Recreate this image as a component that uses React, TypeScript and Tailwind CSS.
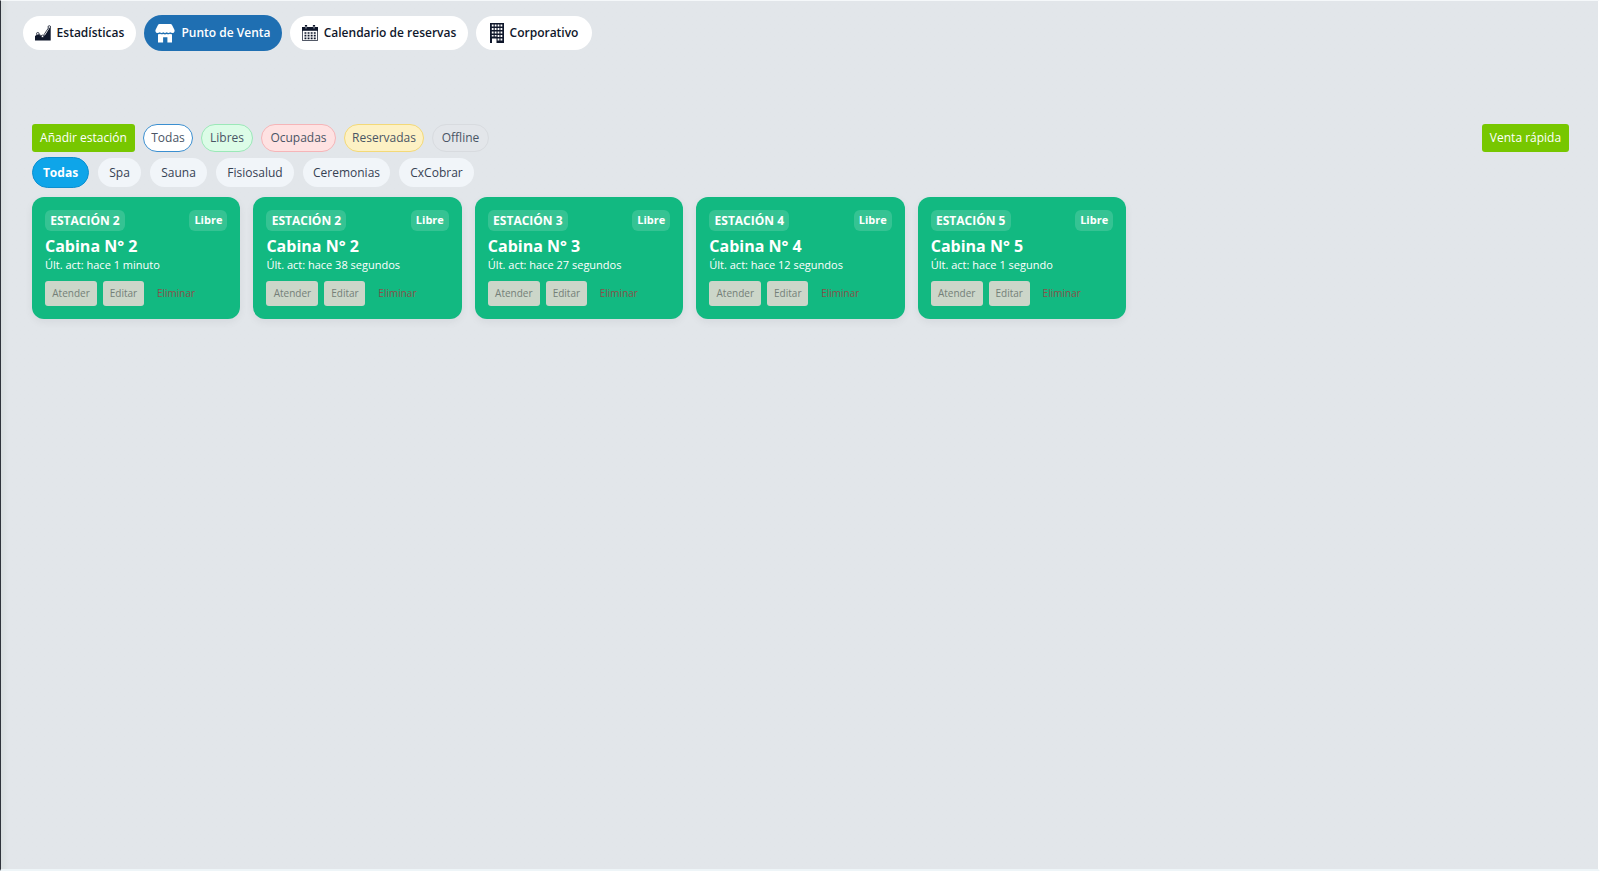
import React from "react";

const StatsIcon = () => (
  <svg viewBox="0 0 16 16" className="h-4 w-4 shrink-0" fill="currentColor" aria-hidden="true">
    <path d="M0 15.500V11L3 9L7.500 12L10.500 9.500L14.500 3H15.700V15.500Z" />
    <circle cx="2.800" cy="8.800" r="1.300" fill="#fff" stroke="currentColor" strokeWidth=".8" />
    <circle cx="7.500" cy="11.300" r="1.200" fill="#fff" stroke="currentColor" strokeWidth=".8" />
    <circle cx="14.300" cy="2" r="1.300" fill="#fff" stroke="currentColor" strokeWidth=".8" />
    <path d="M8.600 10.300L13.400 3M3.900 9.400L6.500 10.800" stroke="currentColor" strokeWidth=".8" />
  </svg>
);

const StoreIcon = () => (
  <svg viewBox="0 0 20 20" className="h-5 w-5 shrink-0" fill="currentColor" aria-hidden="true">
    <path d="M4.500 1h11q1 0 1.500 1l2.400 4.800q.4.900.1 1.800q-.5 1.500-2 1.500q-1.500 0-2.300-.8a2.700 2.700 0 0 1-3.500 0a2.600 2.600 0 0 1-3.400 0a2.700 2.700 0 0 1-3.500 0q-.8.800-2.300.8q-1.500 0-2-1.500q-.3-.9.100-1.800L3 2Q3.500 1 4.500 1Z" />
    <path d="M3 11.300q1.200 0 2-.5q1.700 1 3.300.2q1.700.9 3.400 0q1.600.8 3.300-.2q.8.500 2 .5V19.500h-4.600v-5.300H8.100v5.300H3Z" />
  </svg>
);

const CalendarIcon = () => (
  <svg viewBox="0 0 16 16" className="h-4 w-4 shrink-0" aria-hidden="true">
    <path d="M0 2h16v4.200H0Z" fill="currentColor" />
    <path d="M.4 5v10.600h15.200V5" fill="#fff" stroke="currentColor" strokeWidth=".8" />
    <path d="M0 2h16v3.800H0Z" fill="currentColor" />
    <path d="M4 0v3M12 0v3" stroke="currentColor" strokeWidth="2.200" />
    <path d="M4 1v2.500M12 1v2.500" stroke="#fff" strokeWidth=".7" />
    <path d="M2.500 8h11.500M2.500 10.700h11.500M2.500 13.400h11.500" stroke="currentColor" strokeWidth="1.700" strokeDasharray="1.900 1.200" />
  </svg>
);

const BuildingIcon = () => (
  <svg viewBox="0 0 14 20" className="h-5 w-3.5 shrink-0" aria-hidden="true">
    <path d="M0 0h14v20H0Z" fill="currentColor" />
    <path d="M2.700 1.500v12M5.600 1.500v12M8.500 1.500v16M11.400 1.500v16" stroke="#fff" strokeWidth="1.800" strokeDasharray="2 1.500" />
    <path d="M2 15.500h4.500V20H2Z" fill="#fff" />
  </svg>
);

const sections = [
  { label: "Estadísticas", Icon: StatsIcon, style: "h-[34px] w-[113px] bg-white text-slate-900" },
  { label: "Punto de Venta", Icon: StoreIcon, style: "h-9 w-[138px] bg-[#1f6fb2] text-white" },
  { label: "Calendario de reservas", Icon: CalendarIcon, style: "h-[34px] w-[178px] bg-white text-slate-900" },
  { label: "Corporativo", Icon: BuildingIcon, style: "h-[34px] w-[116px] bg-white text-slate-900" },
];

const states = [
  { label: "Todas", style: "w-[50px] border-[#3b8fd0] bg-white" },
  { label: "Libres", style: "w-[52px] border-[#9be8b8] bg-[#dcfce7]" },
  { label: "Ocupadas", style: "w-[75px] border-[#f5b5b8] bg-[#fee2e2]" },
  { label: "Reservadas", style: "w-20 border-[#f3d978] bg-[#fdf1c4]" },
  { label: "Offline", style: "w-[57px] border-[#d8dbdf] bg-[#e3e6ea]" },
];

const areas = [
  { label: "Todas", style: "h-[31px] w-[57px] bg-[#0ea5e9] border border-[#0c8fd0] text-white font-bold" },
  { label: "Spa", style: "h-[29px] w-[43px] bg-slate-100 text-gray-700 font-medium" },
  { label: "Sauna", style: "h-[29px] w-[57px] bg-slate-100 text-gray-700 font-medium" },
  { label: "Fisiosalud", style: "h-[29px] w-[78px] bg-slate-100 text-gray-700 font-medium" },
  { label: "Ceremonias", style: "h-[29px] w-[87px] bg-slate-100 text-gray-700 font-medium" },
  { label: "CxCobrar", style: "h-[29px] w-[75px] bg-slate-100 text-gray-700 font-medium" },
];

const stations = [
  { code: "ESTACIÓN 2", name: "Cabina N° 2", activity: "hace 1 minuto" },
  { code: "ESTACIÓN 2", name: "Cabina N° 2", activity: "hace 38 segundos" },
  { code: "ESTACIÓN 3", name: "Cabina N° 3", activity: "hace 27 segundos" },
  { code: "ESTACIÓN 4", name: "Cabina N° 4", activity: "hace 12 segundos" },
  { code: "ESTACIÓN 5", name: "Cabina N° 5", activity: "hace 1 segundo" },
];

type Station = (typeof stations)[number];

function StationCard({ code, name, activity }: Station) {
  return (
    <article className="rounded-xl bg-[#12b981] p-[13px] text-white shadow-[0_3px_8px_rgba(15,23,42,0.06)]">
      <div className="flex items-center justify-between">
        <span className="flex h-[21px] w-20 items-center justify-center rounded-md bg-white/15 text-xs font-bold whitespace-nowrap">{code}</span>
        <span className="flex h-[21px] w-[38px] items-center justify-center rounded-md bg-white/15 text-[11px] font-bold">Libre</span>
      </div>
      <h2 className="mt-1 text-base leading-[22px] font-bold">{name}</h2>
      <p className="text-[11px] leading-4">Últ. act: {activity}</p>
      <div className="mt-2 flex gap-[6px] text-[10px]">
        <button className="h-[25px] w-[52px] rounded-[3px] bg-[#ccd6c9] text-[#748078]">Atender</button>
        <button className="h-[25px] w-[41px] rounded-[3px] bg-[#ccd6c9] text-[#748078]">Editar</button>
        <button className="h-[25px] w-[52px] text-center text-[#89504a]">Eliminar</button>
      </div>
    </article>
  );
}

export default function App() {
  return (
    <div className="flex min-h-screen flex-col border-t border-r-2 border-b-2 border-l border-t-[#f5f8fa] border-r-white border-b-[#eef5f8] border-l-[#30343c] bg-linear-to-r from-[#d9dfe0] via-[#e2e6ea] via-[8px] to-[#e2e6ea] font-['Open_Sans','Noto_Sans',sans-serif] text-gray-700">
      <nav className="flex items-center gap-2 pt-[14px] pl-[22px]" aria-label="Secciones">
        {sections.map(({ label, Icon, style }) => (
          <button key={label} className={`flex items-center justify-center gap-[6px] rounded-full text-xs font-semibold whitespace-nowrap ${style}`}>
            <Icon />
            {label}
          </button>
        ))}
      </nav>
      <main className="pt-[72px] pr-[29px] pl-[31px]">
        <div className="flex h-[29px] items-center gap-2 text-xs">
          <button className="h-7 w-[103px] rounded-[3px] bg-[#77c700] text-white">Añadir estación</button>
          {states.map(({ label, style }) => (
            <button key={label} className={`h-7 rounded-full border text-gray-600 ${style}`}>{label}</button>
          ))}
          <button className="ml-auto h-7 w-[87px] rounded-[3px] bg-[#77c700] text-white">Venta rápida</button>
        </div>
        <div className="mt-[5px] flex items-center gap-[9px] text-xs">
          {areas.map(({ label, style }) => (
            <button key={label} className={`rounded-full ${style}`}>{label}</button>
          ))}
        </div>
        <div className="mt-[9px] grid grid-cols-[repeat(auto-fill,minmax(200px,1fr))] gap-[13px]">
          {stations.map((station, i) => (
            <StationCard key={i} {...station} />
          ))}
        </div>
      </main>
    </div>
  );
}
